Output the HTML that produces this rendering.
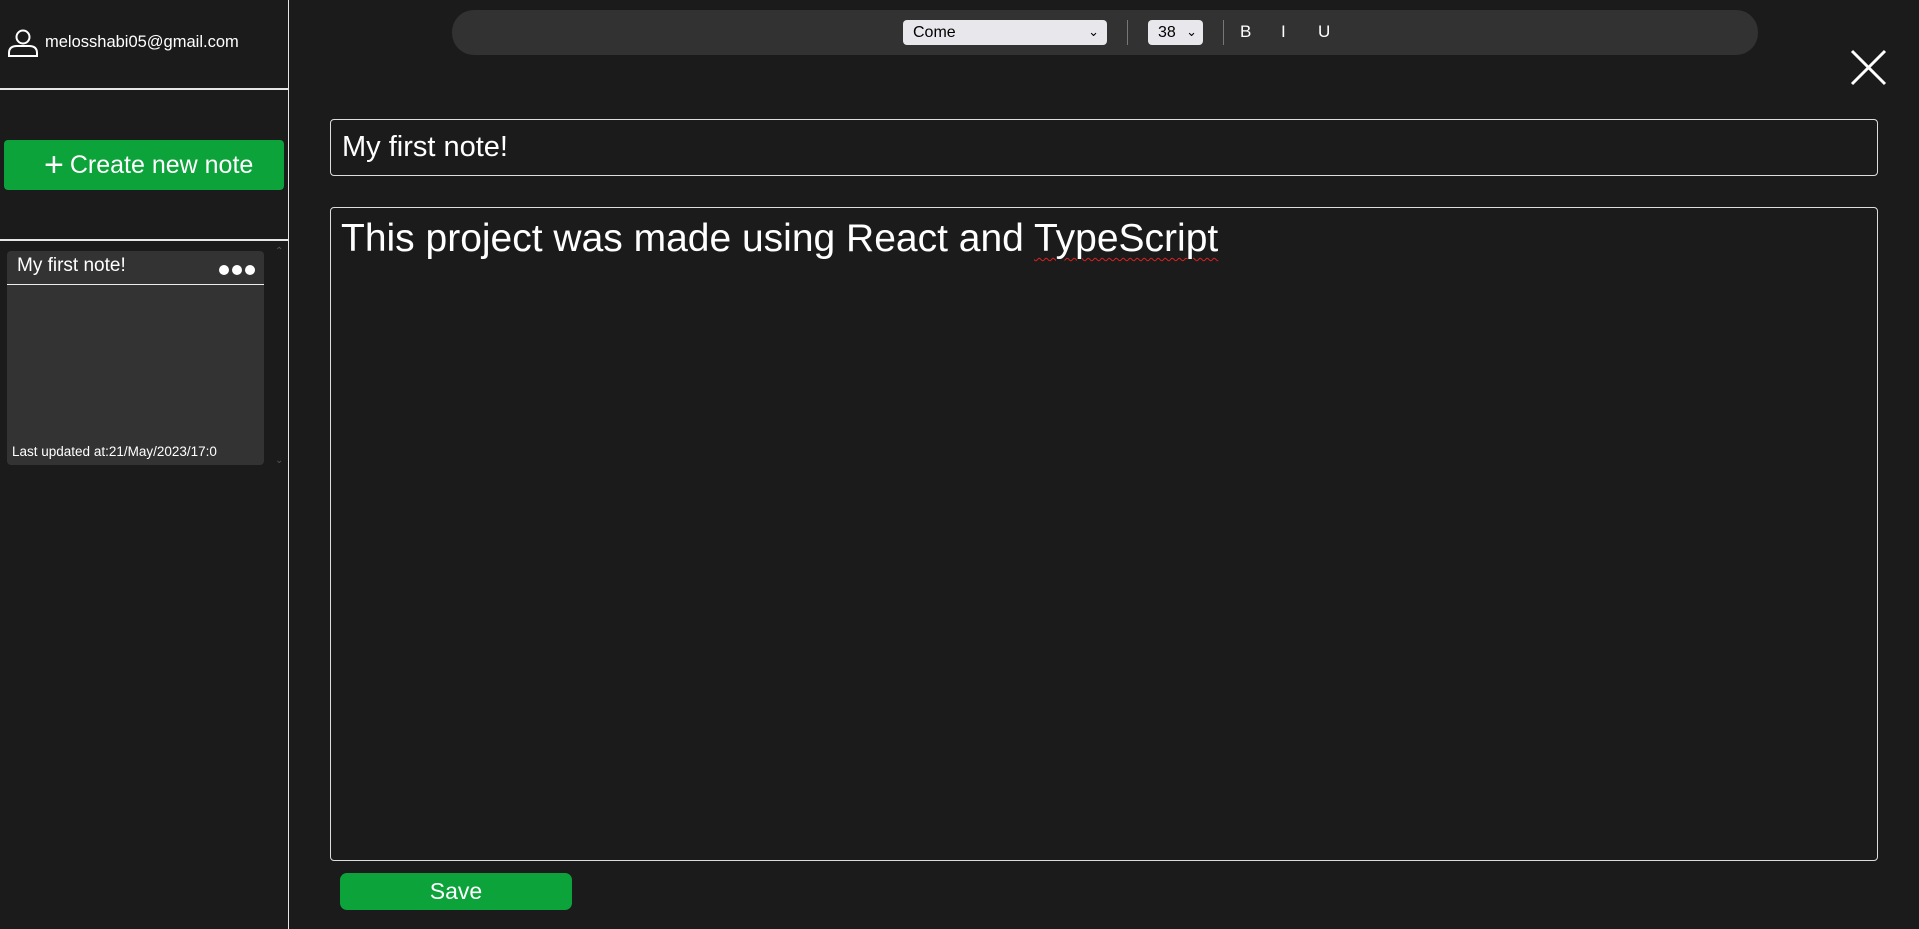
<!DOCTYPE html>
<html><head><meta charset="utf-8"><style>
*{box-sizing:border-box;margin:0;padding:0}
body{width:1919px;height:929px;background:#1b1b1b;font-family:"Liberation Sans","DejaVu Sans",sans-serif;color:#fff;position:relative;overflow:hidden}
.abs{position:absolute}
</style></head><body>
<div class="abs" style="left:288px;top:0;width:1px;height:929px;background:#e6e6e6"></div>
<div class="abs" style="left:0;top:88px;width:288px;height:2px;background:#e6e6e6"></div>
<div class="abs" style="left:0;top:239px;width:288px;height:2px;background:#e6e6e6"></div>
<svg class="abs" style="left:7px;top:28px" width="32" height="30" viewBox="0 0 32 30"><circle cx="16" cy="9" r="6.5" fill="none" stroke="#fff" stroke-width="2"/><path d="M2 28 V25 Q2 18 10 18 H22 Q30 18 30 25 V28 Z" fill="none" stroke="#fff" stroke-width="2"/></svg>
<div class="abs" style="left:45px;top:33px;font-size:16.5px">melosshabi05@gmail.com</div>
<div class="abs" style="left:4px;top:140px;width:280px;height:50px;background:#0ca33b;border-radius:4px;font-size:25px;line-height:50px;padding-left:40px"><span style="font-size:34px;vertical-align:-3px;margin-right:6px">+</span>Create new note</div>
<div class="abs" style="left:7px;top:251px;width:257px;height:214px;background:#333;border-radius:4px"></div>
<div class="abs" style="left:7px;top:284px;width:257px;height:1px;background:#eee"></div>
<div class="abs" style="left:17px;top:255px;font-size:19px">My first note!</div>
<div class="abs" style="left:219px;top:265px;width:10px;height:10px;border-radius:50%;background:#fff"></div>
<div class="abs" style="left:232px;top:265px;width:10px;height:10px;border-radius:50%;background:#fff"></div>
<div class="abs" style="left:245px;top:265px;width:10px;height:10px;border-radius:50%;background:#fff"></div>
<div class="abs" style="left:12px;top:444px;font-size:13.5px">Last updated at:21/May/2023/17:0</div>
<div class="abs" style="left:275px;top:246px;color:#555;font-size:10px">&#8963;</div>
<div class="abs" style="left:275px;top:455px;color:#555;font-size:10px">&#8964;</div>
<div class="abs" style="left:452px;top:10px;width:1306px;height:45px;background:#323232;border-radius:22px"></div>
<div class="abs" style="left:903px;top:20px;width:204px;height:25px;background:#e8e8ec;border-radius:4px;color:#000;font-size:16px;line-height:25px;padding-left:10px">Come<span style="position:absolute;right:8px;top:-1px;font-size:13px">&#8964;</span></div>
<div class="abs" style="left:1127px;top:20px;width:1px;height:25px;background:#777"></div>
<div class="abs" style="left:1148px;top:20px;width:55px;height:25px;background:#e8e8ec;border-radius:4px;color:#000;font-size:16px;line-height:25px;padding-left:10px">38<span style="position:absolute;right:6px;top:-1px;font-size:13px">&#8964;</span></div>
<div class="abs" style="left:1223px;top:20px;width:1px;height:25px;background:#777"></div>
<div class="abs" style="left:1240px;top:22px;font-size:17px">B</div>
<div class="abs" style="left:1281px;top:22px;font-size:17px">I</div>
<div class="abs" style="left:1318px;top:22px;font-size:17px">U</div>
<svg class="abs" style="left:1850px;top:49px" width="37" height="37"><path d="M2 2L35 35M35 2L2 35" stroke="#fff" stroke-width="3"/></svg>
<div class="abs" style="left:330px;top:119px;width:1548px;height:57px;border:1px solid #ddd;border-radius:4px;font-size:29px;line-height:54px;padding-left:11px">My first note!</div>
<div class="abs" style="left:330px;top:207px;width:1548px;height:654px;border:1px solid #ddd;border-radius:4px;font-size:39px;padding:9px 0 0 10px">This project was made using React and <span style="text-decoration:underline wavy #d22;text-decoration-thickness:1px;text-underline-offset:6px">TypeScript</span></div>
<div class="abs" style="left:340px;top:873px;width:232px;height:37px;background:#0ca33b;border-radius:7px;font-size:23px;line-height:37px;text-align:center">Save</div>
</body></html>
